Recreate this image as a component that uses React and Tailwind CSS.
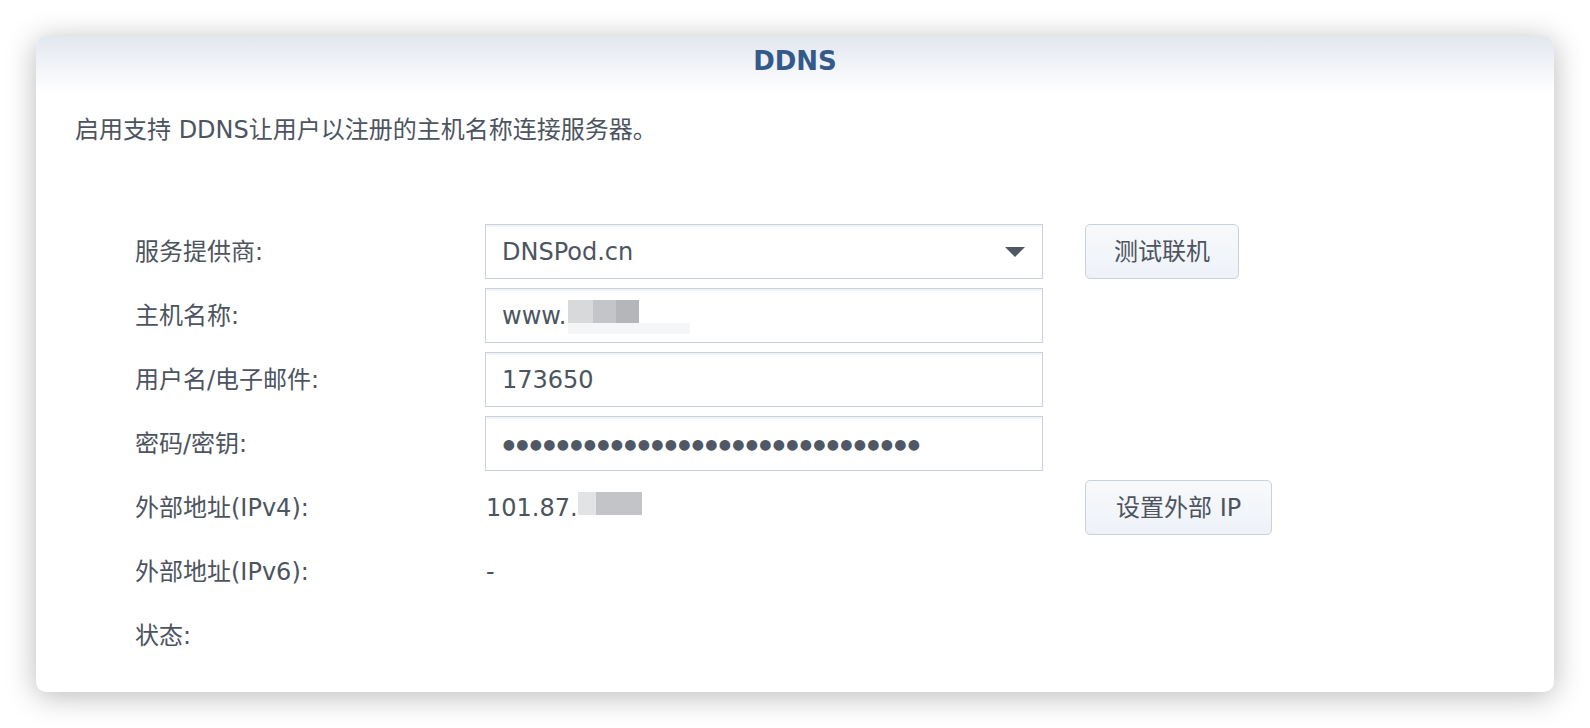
import React from 'react';

const TEXT = 'text-[24px] leading-[30px] text-[#4c5460]';

const Field = ({ children, className = '' }) => (
  <div
    className={`flex h-[55px] items-center border border-[#c9d1dc] bg-white px-[16px] shadow-[inset_0_2px_0_#f1f3f6] ${className}`}
  >
    {children}
  </div>
);

const ActionButton = ({ children, className = 'px-[28px]' }) => (
  <button
    className={`h-[55px] rounded-[5px] border border-[#c9d1dc] bg-gradient-to-b from-[#f8f9fb] to-[#eef2f8] text-[24px] leading-[30px] text-[#4c5460] ${className}`}
  >
    {children}
  </button>
);

const Row = ({ label, children, action }) => (
  <div className="flex h-[55px] items-center">
    <div className={`w-[350px] shrink-0 ${TEXT}`}>{label}</div>
    <div className="w-[558px] shrink-0">{children}</div>
    {action && <div className="ml-[42px]">{action}</div>}
  </div>
);

// mosaic used to hide part of the host name / address
const Mosaic = ({ cells, strip, className = 'ml-[2px]' }) => (
  <span className={`relative inline-flex h-[23px] -translate-y-[4px] align-middle ${className}`}>
    {cells.map(([w, color], i) => (
      <span key={i} className={`${w} ${color} h-full`} />
    ))}
    {strip && <span className="absolute left-0 top-[23px] h-[11px] w-[122px] bg-[#f5f6f8]" />}
  </span>
);

export default function App() {
  const dots = Array.from({ length: 31 });

  return (
    <div className="min-h-screen bg-white p-[36px] font-['DejaVu_Sans','Noto_Sans_CJK_SC',sans-serif]">
      <div className="overflow-hidden rounded-[10px] bg-white shadow-[0_4px_30px_rgba(0,0,0,0.28)]">
        <div className="flex h-[57px] items-center justify-center bg-gradient-to-b from-[#e2e7ef] to-white pb-[7px]">
          <h1 className="text-[26px] font-bold leading-none text-[#345a8b]">DDNS</h1>
        </div>

        <p className={`mt-[22px] pl-[39px] ${TEXT}`}>启用支持 DDNS让用户以注册的主机名称连接服务器。</p>

        <div className="mt-[79px] flex flex-col gap-[9px] pb-[29px] pl-[99px]">
          <Row label="服务提供商:" action={<ActionButton>测试联机</ActionButton>}>
            <Field className="justify-between">
              <span className={TEXT}>DNSPod.cn</span>
              <svg width="20" height="10" viewBox="0 0 20 10" className="mr-[1px]">
                <path d="M0 0h20L10 10z" fill="#4f5864" />
              </svg>
            </Field>
          </Row>

          <Row label="主机名称:">
            <Field>
              <span className={TEXT}>www.</span>
              <Mosaic
                strip
                cells={[
                  ['w-[25px]', 'bg-[#d8d9db]'],
                  ['w-[23px]', 'bg-[#c3c5c8]'],
                  ['w-[23px]', 'bg-[#b4b6b9]'],
                ]}
              />
            </Field>
          </Row>

          <Row label="用户名/电子邮件:">
            <Field>
              <span className={TEXT}>173650</span>
            </Field>
          </Row>

          <Row label="密码/密钥:">
            <Field>
              <div className="flex items-center">
                {dots.map((_, i) => (
                  <span key={i} className="inline-block w-[13.5px] text-center text-[14px] leading-none text-[#4f5864]">
                    ●
                  </span>
                ))}
              </div>
            </Field>
          </Row>

          <Row
            label="外部地址(IPv4):"
            action={<ActionButton className="px-[30px]">设置外部 IP</ActionButton>}
          >
            <div className="flex items-center pl-[1px]">
              <span className={TEXT}>101.87.</span>
              <Mosaic
                className="ml-0"
                cells={[
                  ['w-[18px]', 'bg-[#e2e3e5]'],
                  ['w-[46px]', 'bg-[#c2c4c7]'],
                ]}
              />
            </div>
          </Row>

          <Row label="外部地址(IPv6):">
            <span className={`pl-[1px] ${TEXT}`}>-</span>
          </Row>

          <Row label="状态:" />
        </div>
      </div>
    </div>
  );
}
